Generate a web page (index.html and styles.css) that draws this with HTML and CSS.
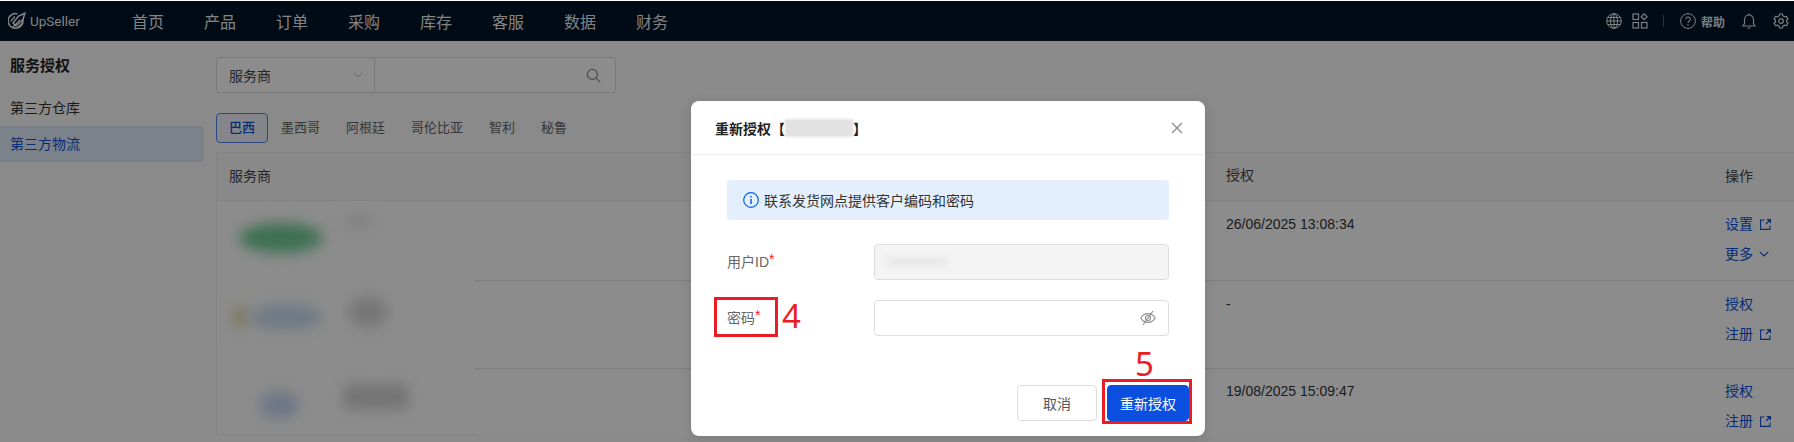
FILE: index.html
```html
<!DOCTYPE html>
<html lang="zh-CN">
<head>
<meta charset="utf-8">
<title>服务授权</title>
<link rel="stylesheet" href="styles.css">
</head>
<body>
<div class="page">
  <header class="topbar">
    <div class="logo">
      <svg class="logo-mark" viewBox="0 0 18 18" fill="none" stroke="currentColor" stroke-width="1.500"><path d="M14.800 7.500A7.400 7.400 0 1 1 9.500 1.800"/><path d="M5 11 10.500 4 16.800 1.200 15 7.500 8 14z"/><path d="M2.500 9.500 7 4.500M5 15 12 8M9.500 16 15 10.500" stroke-width="1.200"/></svg>
      <span class="logo-text">UpSeller</span>
    </div>
    <nav class="nav"><span>首页</span><span>产品</span><span>订单</span><span>采购</span><span>库存</span><span>客服</span><span>数据</span><span>财务</span></nav>
    <div class="tools">
      <svg class="tool globe" viewBox="0 0 16 16" fill="none" stroke="currentColor"><circle cx="8" cy="8" r="7.300"/><ellipse cx="8" cy="8" rx="3.500" ry="7.300"/><path d="M8 .7v14.600M.7 8h14.600M1.700 4.500h12.600M1.700 11.500h12.600"/></svg>
      <svg class="tool grid" viewBox="0 0 16 16" fill="none" stroke="currentColor" stroke-width="1.200"><rect x="1" y="1" width="5.500" height="5.500"/><rect x="1" y="9.500" width="5.500" height="5.500"/><rect x="9.500" y="9.500" width="5.500" height="5.500"/><path d="M12.200.8l2.900 2.900-2.900 2.900-2.900-2.900z"/></svg>
      <i class="divider"></i>
      <svg class="tool help" viewBox="0 0 16 16" fill="none" stroke="currentColor"><circle cx="8" cy="8" r="7.400"/><path d="M5.800 6.200a2.200 2.200 0 1 1 3.400 1.900c-.8.500-1.200.9-1.200 1.900" stroke-width="1.100"/><path d="M8 11.300v1.100" stroke-width="1.200"/></svg>
      <span class="help-text">帮助</span>
      <svg class="tool bell" viewBox="0 0 16 16" fill="none" stroke="currentColor" stroke-width="1.100"><path d="M2 13h12l-1.500-2.500V6.500a4.500 4.500 0 0 0-9 0v4z"/><path d="M8 .6V2M6.500 15h3"/></svg>
      <svg class="tool gear" viewBox="0 0 16 16" fill="none" stroke="currentColor" stroke-width="1.200"><path d="M6.600 1h2.800l.5 1.900 1.700 1 1.900-.5L15 5.800l-1.400 1.300v1.800l1.400 1.300-1.500 2.400-1.900-.5-1.700 1-.5 1.900H6.600l-.5-1.900-1.700-1-1.900.5L1 10.200l1.400-1.300V7.100L1 5.800l1.500-2.400 1.900.5 1.700-1z"/><circle cx="8" cy="8" r="2.300"/></svg>
    </div>
  </header>
  <div class="main">
    <aside class="sidebar">
      <h2 class="side-title">服务授权</h2>
      <div class="side-item">第三方仓库</div>
      <div class="side-item active">第三方物流</div>
    </aside>
    <section class="content">
      <div class="search">
        <div class="search-select"><span>服务商</span>
          <svg class="chev" viewBox="0 0 10 6" fill="none" stroke="currentColor"><path d="M.6.6 5 5 9.400.6"/></svg>
        </div>
        <div class="search-input">
          <svg class="search-icon" viewBox="0 0 16 16" fill="none" stroke="currentColor" stroke-width="1.200"><circle cx="6.800" cy="6.800" r="5.300"/><path d="M10.700 10.700 15 15"/></svg>
        </div>
      </div>
      <div class="tabs">
        <span class="tab on">巴西</span><span class="tab">墨西哥</span><span class="tab">阿根廷</span><span class="tab">哥伦比亚</span><span class="tab">智利</span><span class="tab">秘鲁</span>
      </div>
      <div class="table">
        <div class="thead">
          <div class="th-main">服务商</div>
          <div class="col-auth">授权</div>
          <div class="col-act">操作</div>
        </div>
        <div class="row r1">
          <div class="logo-cell"><i class="blob green"></i><i class="blob faint"></i></div>
          <div class="rest">
            <div class="col-auth">26/06/2025 13:08:34</div>
            <div class="col-act">
              <a class="link">设置<svg class="ext" viewBox="0 0 11 11" fill="none" stroke="currentColor" stroke-width="1.100"><path d="M4.500 1H.6v9.400H10V6.500"/><path d="M6 5 10 1M6.800.6h3.600v3.600"/></svg></a>
              <a class="link">更多<svg class="more" viewBox="0 0 10 6" fill="none" stroke="currentColor" stroke-width="1.100"><path d="M.8.8 5 5 9.200.8"/></svg></a>
            </div>
          </div>
        </div>
        <div class="row r2">
          <div class="logo-cell"><i class="blob yellow"></i><i class="blob slate"></i><i class="blob gray-a"></i></div>
          <div class="rest">
            <div class="col-auth">-</div>
            <div class="col-act">
              <a class="link">授权</a>
              <a class="link">注册<svg class="ext" viewBox="0 0 11 11" fill="none" stroke="currentColor" stroke-width="1.100"><path d="M4.500 1H.6v9.400H10V6.500"/><path d="M6 5 10 1M6.800.6h3.600v3.600"/></svg></a>
            </div>
          </div>
        </div>
        <div class="row r3">
          <div class="logo-cell"><i class="blob blue"></i><i class="blob gray-b"></i></div>
          <div class="rest last">
            <div class="col-auth">19/08/2025 15:09:47</div>
            <div class="col-act">
              <a class="link">授权</a>
              <a class="link">注册<svg class="ext" viewBox="0 0 11 11" fill="none" stroke="currentColor" stroke-width="1.100"><path d="M4.500 1H.6v9.400H10V6.500"/><path d="M6 5 10 1M6.800.6h3.600v3.600"/></svg></a>
            </div>
          </div>
        </div>
      </div>
    </section>
  </div>
</div>

<div class="mask">
  <div class="modal">
    <div class="modal-head">
      <div class="modal-title">重新授权<span class="bracket">【</span><i class="redact"></i><span class="bracket">】</span></div>
      <svg class="close" viewBox="0 0 12 12" fill="none" stroke="currentColor" stroke-width="1.300"><path d="M1 1l10 10M11 1 1 11"/></svg>
    </div>
    <div class="modal-body">
      <div class="alert">
        <svg class="info" viewBox="0 0 16 16" fill="none" stroke="currentColor"><circle cx="8" cy="8" r="7.300" stroke-width="1.200"/><path d="M8 7v5M8 4v1.400" stroke-width="1.500"/></svg>
        <span>联系发货网点提供客户编码和密码</span>
      </div>
      <div class="field f-user">
        <label class="label">用户ID<em>*</em></label>
        <div class="control disabled"><i class="redact-input"></i></div>
      </div>
      <div class="field f-pass">
        <label class="label">密码<em>*</em></label>
        <div class="control">
          <svg class="eye" viewBox="0 0 16 16" fill="none" stroke="currentColor" stroke-width="1.100"><path d="M.8 8C2.500 5 5 3.600 8 3.600S13.500 5 15.200 8c-1.700 3-4.200 4.400-7.200 4.400S2.500 11 .8 8z"/><circle cx="8" cy="8" r="2.500"/><path d="M13 1 3 15"/></svg>
        </div>
      </div>
      <div class="modal-foot">
        <button class="btn">取消</button>
        <button class="btn primary">重新授权</button>
      </div>
    </div>
  </div>
  <div class="mark box-label"></div>
  <div class="mark box-btn"></div>
  <span class="step step-4">4</span>
  <span class="step step-5">5</span>
</div>
</body>
</html>
```

FILE: styles.css
```css
* { box-sizing: border-box; }
html, body { margin: 0; height: 442px; overflow: hidden; background: #fff; }
body {
  font-family: "Liberation Sans", "Noto Sans CJK SC", sans-serif;
  font-size: 14px;
  color: #333;
  padding-top: 1px;
}
.page { height: 441px; background: #fbfbfb; }

.topbar { height: 40px; background: #001529; color: rgba(255,255,255,.95); display: flex; align-items: center; }
.logo { width: 132px; display: flex; align-items: center; padding-left: 8px; flex: none; }
.logo-mark { width: 18px; height: 18px; }
.logo-text { font-family: Roboto, sans-serif; font-size: 13.500px; margin-left: 4px; }
.nav { display: flex; gap: 40px; font-size: 16px; flex: none; }
.tools { margin-left: auto; display: flex; align-items: center; padding-right: 5px; color: rgba(255,255,255,.9); }
.tool { width: 16px; height: 16px; flex: none; }
.grid { margin-left: 10px; }
.divider { width: 1px; height: 12px; background: rgba(255,255,255,.3); margin: 0 16px 0 15px; }
.help-text { font-size: 12px; font-weight: 700; margin: 0 0 0 5px; }
.bell { margin-left: 16px; }
.gear { margin-left: 16px; }

.main { display: flex; height: 401px; }
.sidebar { width: 216px; flex: none; padding-top: 13px; }
.side-title { margin: 0 0 12px; padding-left: 10px; font-size: 15px; line-height: 24px; font-weight: 700; color: #222; }
.side-item { width: 204px; height: 36px; line-height: 36px; padding-left: 10px; border-radius: 0 4px 4px 0; color: #333; }
.side-item.active { background: #e2edfb; color: #0b4fd9; }

.content { flex: 1; min-width: 0; padding-top: 16px; }
.search { width: 400px; height: 36px; display: flex; border: 1px solid #ddd; border-radius: 4px; background: #fff; }
.search-select { width: 158px; display: flex; align-items: center; justify-content: space-between; padding: 0 11px 0 12px; border-right: 1px solid #ddd; color: #444; }
.chev { width: 10px; height: 6px; color: #bbb; }
.search-input { flex: 1; display: flex; align-items: center; justify-content: flex-end; padding-right: 14px; }
.search-icon { width: 15px; height: 15px; color: #888; }

.tabs { display: flex; margin-top: 20px; height: 30px; }
.tab { padding: 0 12px; line-height: 27px; font-size: 13px; color: #666; border: 1px solid transparent; }
.tab.on { border-color: #4d84e8; border-radius: 4px; color: #0b4fd9; background: #f0f5fe; font-weight: 500; }

.table { margin-top: 9px; border: 1px solid #eee; border-right: 0; border-bottom: 0; background: #fff; }
.thead { display: flex; height: 48px; align-items: center; padding-bottom: 3px; background: #fafafa; border-bottom: 1px solid #eee; color: #444; }
.th-main { flex: 1; padding-left: 12px; }
.col-auth { width: 499px; flex: none; padding-left: 12px; line-height: 20px; }
.col-act { width: 81px; flex: none; padding-left: 12px; display: flex; flex-direction: column; gap: 10px; }
.thead .col-act { display: block; }

.row { display: flex; }
.r1 { height: 80px; }
.r2 { height: 88px; }
.r3 { height: 66px; }
.logo-cell { width: 258px; flex: none; display: flex; overflow: hidden; }
.r3 .logo-cell { border-bottom: 1px solid #f0f0f0; }
.rest { flex: 1; display: flex; justify-content: flex-end; padding-top: 13px; border-bottom: 1px solid #e4e4e4; }
.rest.last { border-bottom: 0; padding-top: 12px; }
.link { display: flex; align-items: center; line-height: 20px; color: #0b4fd9; }

.ext { width: 11px; height: 11px; margin-left: 7px; }
.more { width: 10px; height: 6px; margin-left: 6px; }

.blob { display: block; flex: none; filter: blur(7px); border-radius: 50%; }
.green { width: 84px; height: 30px; margin: 22px 0 0 22px; background: #6fcc96; }
.faint { width: 32px; height: 14px; margin: 13px 0 0 20px; background: #ecebeb; }
.yellow { width: 14px; height: 22px; margin: 25px 0 0 16px; background: #e2d49e; }
.slate { width: 72px; height: 26px; margin: 23px 0 0 3px; background: #cadef2; }
.gray-a { width: 40px; height: 30px; margin: 16px 0 0 26px; background: #d6d6d6; }
.blue { width: 40px; height: 28px; margin: 22px 0 0 42px; background: #c8d8f4; }
.gray-b { width: 66px; height: 26px; margin: 15px 0 0 44px; background: #d4d4d4; border-radius: 8px; }

.mask {
  position: absolute; left: 0; right: 0; top: 1px; bottom: 0;
  background: rgba(0,0,0,.45);
  padding: 100px 0 0 691px;
}
.modal { width: 514px; height: 335px; background: #fff; border-radius: 8px; box-shadow: 0 2px 12px rgba(0,0,0,.12); }
.modal-head { height: 54px; display: flex; align-items: center; justify-content: space-between; padding: 0 22px 0 24px; border-bottom: 1px solid #eee; }
.modal-title { display: flex; align-items: center; font-size: 14px; font-weight: 700; color: #222; }
.bracket { width: 14px; flex: none; }
.redact { width: 68px; height: 18px; background: #e2e2e2; filter: blur(1px); }
.close { width: 12px; height: 12px; color: #8a8a8a; }

.modal-body { padding: 25px 36px 0; }
.alert { height: 40px; display: flex; align-items: center; padding-left: 16px; background: #e3effd; border-radius: 4px; color: #333; }
.info { width: 16px; height: 16px; color: #0b5fe0; margin-right: 5px; }
.field { display: flex; align-items: center; }
.f-user { margin-top: 24px; height: 36px; }
.f-pass { margin-top: 20px; height: 36px; }
.label { width: 147px; flex: none; color: #666; line-height: 20px; }
.label em { color: #f5222d; font-style: normal; font-size: 14px; line-height: 10px; vertical-align: 3px; }
.control { flex: 1; height: 36px; border: 1px solid #ddd; border-radius: 4px; display: flex; align-items: center; justify-content: flex-end; padding-right: 12px; }
.control.disabled { background: #f4f4f4; justify-content: flex-start; padding-left: 12px; }
.redact-input { width: 60px; height: 10px; background: #e8e8e8; filter: blur(3px); }
.eye { width: 16px; height: 16px; color: #8c8c8c; }

.modal-foot { margin-top: 49px; display: flex; gap: 10px; margin-right: -20px; justify-content: flex-end; }
.btn { width: 80px; height: 36px; border: 1px solid #ddd; border-radius: 4px; background: #fff; font: inherit; color: #555; padding: 0; }
.btn.primary { width: 82px; background: #0b4fe0; border-color: #0b4fe0; color: #fff; }

.mark { position: absolute; border: 3px solid #ec1c24; }
.box-label { left: 714px; top: 296px; width: 64px; height: 40px; }
.box-btn { left: 1102px; top: 378px; width: 90px; height: 45px; }
.step { position: absolute; font-family: "Noto Sans", sans-serif; font-weight: 400; font-size: 33px; line-height: 40px; color: #ec1c24; }
.step-4 { left: 782px; top: 295px; }
.step-5 { left: 1135px; top: 343px; }
```
